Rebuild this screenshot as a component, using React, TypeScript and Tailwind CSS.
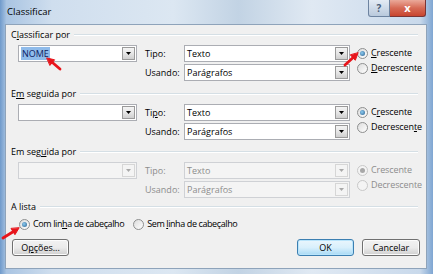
import React from "react";

const Arrow = () => (
  <svg className="pointer-events-none absolute left-0 top-0" width="433" height="274" viewBox="0 0 433 274">
    <g stroke="#e8141b" strokeWidth="2.8" fill="#e8141b" strokeLinecap="round">
      <line x1="60" y1="69" x2="52.4" y2="62.5" />
      <polygon points="47,58 54.6,59.8 50.1,65.2" strokeWidth="1" />
      <line x1="345" y1="65" x2="352.9" y2="57.7" />
      <polygon points="358,53 355.3,60.3 350.5,55.1" strokeWidth="1" />
      <line x1="3" y1="238" x2="13.1" y2="231.7" />
      <polygon points="19,228 14.95,234.7 11.2,228.7" strokeWidth="1" />
    </g>
  </svg>
);

function Combo({
  className,
  value,
  disabled,
  selected,
}: {
  className: string;
  value?: string;
  disabled?: boolean;
  selected?: boolean;
}) {
  return (
    <div
      className={`flex h-[17px] items-center border ${
        disabled ? "border-[#cfd1d5] bg-[#f4f4f4] text-[#8d8d8d]" : "border-[#abadb3] bg-white text-black"
      } ${className}`}
    >
      <span className="flex-1 truncate pl-[2px] leading-[13px]">
        {selected ? <span className="bg-[#8fbbea] px-[1px] text-[#0d1d63]">{value}</span> : value}
      </span>
      <span
        className={`mr-[1px] flex h-[13px] w-[13px] items-center justify-center border ${
          disabled
            ? "border-[#d6d6d6] bg-[#f4f4f4]"
            : "border-[#9a9a9a] bg-gradient-to-b from-[#f4f4f4] via-[#e6e6e6] to-[#cfcfcf]"
        }`}
      >
        <svg width="5" height="3" viewBox="0 0 5 3">
          <polygon points="0,0 5,0 2.5,3" fill={disabled ? "#a8a8a8" : "#000"} />
        </svg>
      </span>
    </div>
  );
}

function Radio({ checked, disabled }: { checked?: boolean; disabled?: boolean }) {
  return (
    <span
      className={`flex h-[11px] w-[11px] shrink-0 items-center justify-center rounded-full border ${
        disabled
          ? "border-[#c8c8c8] bg-[#f4f4f4]"
          : "border-[#8e8f8f] bg-gradient-to-br from-[#dcdcdc] to-[#ffffff]"
      }`}
    >
      {checked && (
        <span
          className={`h-[5px] w-[5px] rounded-full ${
            disabled ? "bg-[#a8a8a8]" : "bg-[radial-gradient(circle_at_40%_40%,#8ccbf0,#2a5f8e)]"
          }`}
        />
      )}
    </span>
  );
}

function RadioLabel({
  checked,
  disabled,
  children,
}: {
  checked?: boolean;
  disabled?: boolean;
  children: React.ReactNode;
}) {
  return (
    <div className={`flex h-[12px] items-center gap-[3px] ${disabled ? "text-[#8d8d8d]" : "text-black"}`}>
      <Radio checked={checked} disabled={disabled} />
      <span className="leading-[12px]">{children}</span>
    </div>
  );
}

function GroupLabel({ children }: { children: React.ReactNode }) {
  return (
    <div className="flex h-[20px] items-center pl-[5px] pr-[8px]">
      <span className="leading-[12px]">{children}</span>
      <span className="ml-[4px] h-[2px] flex-1 border-t border-b border-t-[#d5dfe5] border-b-white" />
    </div>
  );
}

function Section({
  label,
  first,
  selected,
  disabled,
  tipo,
  usando,
  up,
  down,
}: {
  label: React.ReactNode;
  first?: string;
  selected?: boolean;
  disabled?: boolean;
  tipo: React.ReactNode;
  usando: React.ReactNode;
  up: React.ReactNode;
  down: React.ReactNode;
}) {
  return (
    <div className="flex flex-col">
      <GroupLabel>{label}</GroupLabel>
      <div className="flex pl-[12px]">
        <Combo className="w-[119px]" value={first} selected={selected} disabled={disabled} />
        <div className={`ml-[8px] flex flex-col gap-[2px] ${disabled ? "text-[#8d8d8d]" : "text-black"}`}>
          <div className="flex h-[17px] items-center">
            <span className="w-[39px]">{tipo}</span>
            <Combo className="w-[166px]" value="Texto" disabled={disabled} />
          </div>
          <div className="flex h-[17px] items-center">
            <span className="w-[39px]">{usando}</span>
            <Combo className="w-[166px]" value="Parágrafos" disabled={disabled} />
          </div>
        </div>
        <div className="ml-[7px] flex flex-col gap-[3px] pt-[2px] tracking-[-0.1px]">
          <RadioLabel checked disabled={disabled}>
            {up}
          </RadioLabel>
          <RadioLabel disabled={disabled}>{down}</RadioLabel>
        </div>
      </div>
    </div>
  );
}

function Button({ children, primary, className }: { children: React.ReactNode; primary?: boolean; className: string }) {
  return (
    <button
      className={`flex h-[17px] items-center justify-center rounded-[3px] border leading-[12px] text-black ${
        primary
          ? "border-[#3c7fb1] bg-gradient-to-b from-[#eaf6fd] via-[#d9f0fc] to-[#a7d9f5] shadow-[inset_0_0_0_1px_#b9e4fb]"
          : "border-[#707070] bg-gradient-to-b from-[#f2f2f2] via-[#ebebeb] to-[#cfcfcf] shadow-[inset_0_0_0_1px_#fcfcfc]"
      } ${className}`}
    >
      {children}
    </button>
  );
}

export default function App() {
  return (
    <div className="relative h-[274px] w-[433px] overflow-hidden bg-[linear-gradient(90deg,#6f9acb_0%,#a9c4e2_1.5%,#cfdeee_12%,#dce7f2_40%,#c2d3e4_55%,#e0e9f3_72%,#c9d9eb_97%,#7fa6d2_100%)] font-['Open_Sans',sans-serif] text-[9px] text-black">
      <div className="flex h-[24px]">
        <span className="pl-[7px] pt-[5px] text-[9.5px] leading-[13px] text-black">Classificar</span>
        <div className="ml-auto mr-[7px] flex h-[17px]">
          <div className="flex w-[22px] items-center justify-center rounded-bl-[3px] border border-t-0 border-[#6d83a0] bg-gradient-to-b from-[#e3ebf4] to-[#b9c9dc] text-[10px] font-bold text-[#4a5d78]">
            ?
          </div>
          <div className="flex w-[36px] items-center justify-center rounded-br-[3px] border border-l-0 border-t-0 border-[#7a3535] bg-gradient-to-b from-[#eaa99a] via-[#d66a55] to-[#c8442e] text-[11px] font-bold text-white">
            x
          </div>
        </div>
      </div>
      <div className="ml-[5px] mr-[6px] flex h-[245px] flex-col border border-[#8ea3ba] bg-[#f0f0f0]">
        <Section
          label={
            <>
              C<u>l</u>assificar por
            </>
          }
          first="NOME"
          selected
          tipo="Tipo:"
          usando="Usando:"
          up={
            <>
              <u>C</u>rescente
            </>
          }
          down={
            <>
              <u>D</u>ecrescente
            </>
          }
        />
        <div className="h-[3px]" />
        <Section
          label={
            <>
              E<u>m</u> seguida por
            </>
          }
          tipo={
            <>
              Ti<u>p</u>o:
            </>
          }
          usando="Usando:"
          up={
            <>
              C<u>r</u>escente
            </>
          }
          down={
            <>
              Decrescen<u>t</u>e
            </>
          }
        />
        <div className="h-[2px]" />
        <Section
          label={
            <>
              Em seg<u>u</u>ida por
            </>
          }
          disabled
          tipo="Tipo:"
          usando="Usando:"
          up="Crescente"
          down="Decrescente"
        />
        <div className="mt-[-1px]">
          <GroupLabel>A lista</GroupLabel>
        </div>
        <div className="flex h-[14px] items-center pl-[13px] tracking-[-0.4px]">
          <RadioLabel checked>
            Com lin<u>h</u>a de cabeçalho
          </RadioLabel>
          <div className="ml-[9px]">
            <RadioLabel>
              Sem <u>l</u>inha de cabeçalho
            </RadioLabel>
          </div>
        </div>
        <div className="mt-[8px] flex pl-[6px]">
          <Button className="w-[57px]">
            O<u>p</u>ções...
          </Button>
          <Button primary className="ml-auto w-[57px]">
            OK
          </Button>
          <Button className="ml-[8px] mr-[6px] w-[58px]">Cancelar</Button>
        </div>
      </div>
      <Arrow />
    </div>
  );
}
